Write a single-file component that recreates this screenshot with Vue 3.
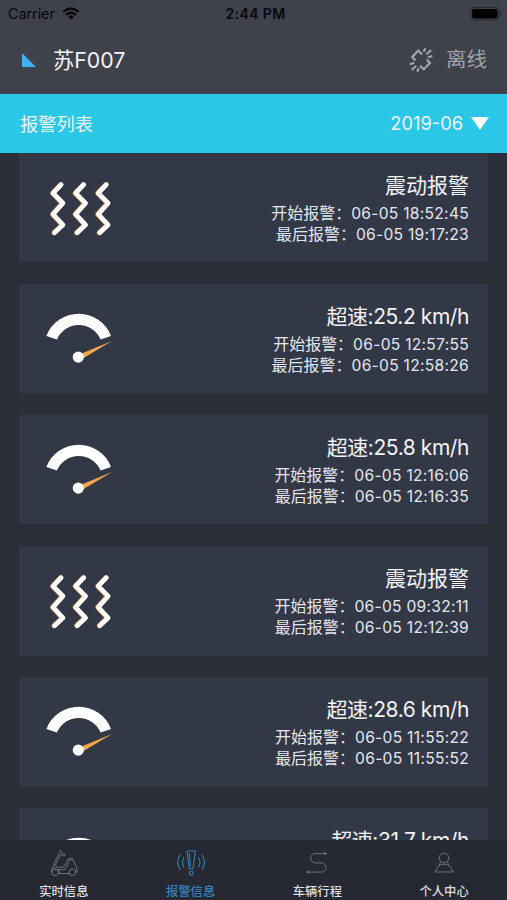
<script setup>
const alarms = [
  { type: 'shake', title: '震动报警', start: '06-05 18:52:45', end: '06-05 19:17:23' },
  { type: 'speed', title: '超速:25.2 km/h', start: '06-05 12:57:55', end: '06-05 12:58:26' },
  { type: 'speed', title: '超速:25.8 km/h', start: '06-05 12:16:06', end: '06-05 12:16:35' },
  { type: 'shake', title: '震动报警', start: '06-05 09:32:11', end: '06-05 12:12:39' },
  { type: 'speed', title: '超速:28.6 km/h', start: '06-05 11:55:22', end: '06-05 11:55:52' },
  { type: 'speed', title: '超速:31.7 km/h' },
]
const tabs = [
  { id: 'live', label: '实时信息' },
  { id: 'alarm', label: '报警信息' },
  { id: 'trip', label: '车辆行程' },
  { id: 'user', label: '个人中心' },
]
</script>

<template>
  <div class="screen">
    <header class="top">
      <div class="status">
        <div class="carrier">
          <span>Carrier</span>
          <svg width="18" height="13" viewBox="0 0 18 13" fill="none" stroke="#08090c" stroke-width="2.3">
            <path d="M1.2 4.8Q9-1.8 16.8 4.8M4 7.9Q9 3.7 14 7.9" />
            <path d="M9 12.5L6.1 9.7Q9 7.5 11.9 9.7Z" fill="#08090c" stroke="none" />
          </svg>
        </div>
        <span class="clock">2:44 PM</span>
        <svg class="battery" width="33" height="14" viewBox="0 0 33 14">
          <rect x=".5" y=".5" width="28.5" height="12.5" rx="3.5" fill="none" stroke="#292b33" />
          <rect x="2" y="2" width="25.5" height="9.5" rx="2" fill="#000" />
          <path d="M30.5 4.5Q32.5 6.8 30.5 9Z" fill="#24262d" />
        </svg>
      </div>
      <div class="vehicle">
        <svg width="14" height="14" viewBox="0 0 14 14"><path d="M0 0V14H14Z" fill="#41b2f8" /></svg>
        <h1>苏F007</h1>
        <div class="offline">
          <svg width="24" height="26" viewBox="0 0 24 26" fill="none" stroke="#a2a4ab" stroke-width="2.2">
            <path d="M6.5 13.4L3.2 9.9L9.2 3.6L13 7.2M17.7 12.6L21 16.1L14.8 22.3L11 18.7" />
            <path d="M14.6 4.7L16.4 1.2M17.4 7.1L22.2 3.1M19.1 10.3L23.4 9M5.3 15.9L.8 17.2M7 19L2.7 22.9M9.8 21.1L8.2 24.8" />
          </svg>
          <span>离线</span>
        </div>
      </div>
    </header>

    <div class="filter">
      <span>报警列表</span>
      <div class="month">
        <span>2019-06</span>
        <svg width="18" height="13" viewBox="0 0 18 13"><path d="M0 0H18L9 13Z" fill="#fff" /></svg>
      </div>
    </div>

    <main class="list">
      <article v-for="(alarm, i) in alarms" :key="i" class="card" :class="alarm.type">
        <svg v-if="alarm.type === 'shake'" class="icon" width="70" height="60" viewBox="0 0 70 60" fill="none" stroke-linecap="round" stroke-linejoin="round">
          <g v-for="x in [0, 22.6, 45.2]" :key="x" :transform="`translate(${x} 0)`">
            <path d="M16.8 5.6L8.5 14.2L18.4 24.2L8.5 35.2L18.4 45.9L10 53.7" stroke="#d99555" stroke-width="5" />
            <path d="M17.2 5.6L9.1 14.2L19 24.2L9.1 35.2L19 45.9L10.6 53.7" stroke="#fff" stroke-width="4.6" />
          </g>
        </svg>
        <svg v-else class="icon" width="70" height="60" viewBox="0 0 70 60">
          <path d="M2.4 25.9A34.6 34.6 0 0 1 67 25.9L56.6 29.6A23.6 23.6 0 0 0 12.9 29.6Z" fill="#fff" />
          <path d="M37.6 43.4L68 31.1L38.8 48.4Z" fill="#f4a64b" />
          <circle cx="34.3" cy="47.1" r="5.6" fill="#fff" />
        </svg>
        <div class="details">
          <h2>{{ alarm.title }}</h2>
          <template v-if="alarm.start">
            <p><span>开始报警：</span>{{ alarm.start }}</p>
            <p><span>最后报警：</span>{{ alarm.end }}</p>
          </template>
        </div>
      </article>
    </main>

    <nav class="tabs">
      <div v-for="tab in tabs" :key="tab.id" class="tab" :class="{ active: tab.id === 'alarm' }">
        <svg v-if="tab.id === 'live'" width="30" height="30" viewBox="0 0 30 30" fill="none" stroke="currentColor">
          <path d="M10 2.2L12 2.6Q13 3.2 12.3 4.6L16 6.5L15.2 8L11.7 6.5L7 15.5Q5.6 19 9 19.3H14.2L19.2 12.3Q19.5 10.2 21.5 10.2Q23.8 10.2 24.3 12.2L26.7 17.3Q28.3 20.5 28 24.2H26.5M10.7 4.5L5.4 14.5Q3.2 20.8 7.2 21.7H15.4L20.2 14.2M17.8 12H24.4M10 25.6H20.5" />
          <path d="M2.2 24.2Q2.2 19.4 4.9 18.3M9.2 21.8Q10.4 23 10.4 25.6" />
          <circle cx="6.2" cy="24.3" r="3.4" /><circle cx="23.4" cy="24.3" r="3.3" />
        </svg>
        <svg v-else-if="tab.id === 'alarm'" width="30" height="30" viewBox="0 0 30 30" fill="none" stroke="currentColor" stroke-width="1.1">
          <path d="M11 3.3Q15 2.1 19.4 3.3L16.9 21H13.3ZM13.3 5L14.5 18.5" />
          <circle cx="15.2" cy="25.2" r="1.9" />
          <path d="M4.2 6.5Q-.8 14.5 4.2 22M8 9.5Q4.9 14.5 8 19.2M26 6.5Q31 14.5 26 22M22.4 9.5Q25.5 14.5 22.4 19.2" />
        </svg>
        <svg v-else-if="tab.id === 'trip'" width="30" height="30" viewBox="0 0 30 30" fill="none" stroke="currentColor">
          <path d="M22.5 5.5H13.4A4.7 4.7 0 0 0 13.4 14.9H19.5A4.6 4.6 0 0 1 19.5 24.1H6.7" />
          <circle cx="23.3" cy="5.5" r="1" fill="currentColor" /><circle cx="6" cy="24" r="1" fill="currentColor" />
        </svg>
        <svg v-else width="30" height="30" viewBox="0 0 30 30" fill="none" stroke="currentColor">
          <circle cx="15" cy="9.9" r="4.8" />
          <path d="M6.5 24Q8.2 16.3 15 16.1Q21.8 16.3 24 24ZM11.4 14.3L10.2 17.3M18.6 14.3L19.8 17.3" />
        </svg>
        <span>{{ tab.label }}</span>
      </div>
    </nav>
  </div>
</template>

<style>
body { margin: 0; background: #2b2e36; }
</style>

<style scoped>
* { box-sizing: border-box; }
.screen {
  display: flex;
  flex-direction: column;
  width: 507px;
  height: 900px;
  overflow: hidden;
  background: #2b2e36;
  color: #f1f3f8;
  font-family: Inter, "Noto Sans CJK SC", sans-serif;
}
svg { display: block; flex: none; }
h1, h2, p { margin: 0; font-weight: 400; }
.top { height: 94px; flex: none; background: #3f414b; }
.status {
  display: grid;
  grid-template-columns: 1fr auto 1fr;
  align-items: center;
  height: 27px;
  padding: 0 4px 0 8px;
  color: #08090c;
  font-size: 14.5px;
}
.carrier { display: flex; align-items: center; gap: 7px; }
.carrier span { letter-spacing: -.1px; }
.clock { font-size: 14px; font-weight: 600; letter-spacing: .4px; }
.battery { justify-self: end; }
.vehicle { display: flex; align-items: center; height: 66px; padding: 0 20px 0 22px; }
.vehicle h1 { margin-left: 17px; font-size: 21.3px; line-height: 30px; }
.offline { display: flex; align-items: center; gap: 13px; margin-left: auto; color: #a2a4ab; font-size: 20.5px; line-height: 30px; }
.filter {
  display: flex;
  align-items: center;
  justify-content: space-between;
  height: 58.5px;
  flex: none;
  padding: 0 18px 0 20px;
  background: #2bc7e7;
  font-size: 18.3px;
}
.month { display: flex; align-items: center; gap: 8px; }
.list {
  display: flex;
  flex-direction: column;
  gap: 21.7px;
  flex: 1;
  min-height: 0;
  overflow: hidden;
  padding: 0 19px 0 18.5px;
}
.card {
  display: flex;
  justify-content: space-between;
  height: 109.5px;
  flex: none;
  padding: 19px 19px 0 25.5px;
  background: #333847;
}
.icon { margin-top: 7px; }
.details { text-align: right; white-space: nowrap; }
.details h2 { font-size: 21px; line-height: 28px; margin-bottom: 3px; }
.speed h2 { letter-spacing: -.43px; }
.details p { font-size: 15.6px; line-height: 21px; letter-spacing: .28px; color: #e4e7ef; }
.details p span { font-size: 15.9px; letter-spacing: .1px; }
.tabs { display: grid; grid-template-columns: repeat(4, 1fr); height: 60px; flex: none; background: #262931; }
.tab { display: flex; flex-direction: column; align-items: center; padding: 8px 0 0 1px; color: #70737b; }
.tab span { margin-top: 5px; font-size: 12.3px; font-weight: 500; line-height: 17px; color: #dcdee4; }
.tab.active, .tab.active span { color: #3482bd; }
</style>
